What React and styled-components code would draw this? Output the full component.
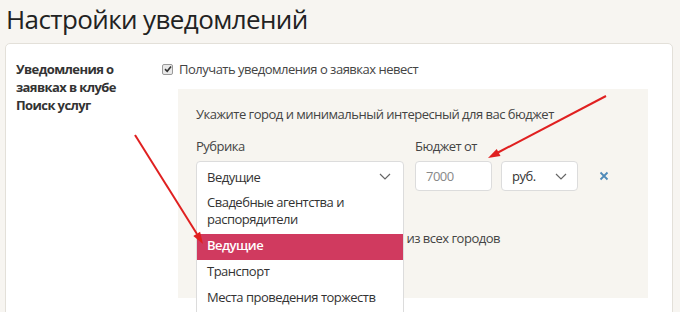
import React from "react";
import styled, { createGlobalStyle } from "styled-components";

const GlobalStyle = createGlobalStyle`
  html, body { margin: 0; padding: 0; }
  body {
    background: #f7f5f1;
    font-family: "Open Sans", "Noto Sans", Arial, sans-serif;
    color: #3a3a3a;
    overflow: hidden;
    width: 680px;
    height: 312px;
    position: relative;
    letter-spacing: -0.5px;
  }
`;

const Page = styled.div`
  padding: 0 7px 0 5px;
`;

const Title = styled.h1`
  margin: 0;
  padding-left: 1px;
  height: 43px;
  font-size: 26px;
  font-weight: 400;
  line-height: 38px;
  letter-spacing: -0.6px;
  color: #222;
`;

const Card = styled.div`
  background: #fff;
  border: 1px solid #e3e0d9;
  border-radius: 5px;
  display: grid;
  grid-template-columns: 146px 1fr;
  padding: 16px 24px 0 10px;
  min-height: 300px;
`;

const SideLabel = styled.div`
  font-size: 13px;
  font-weight: 700;
  line-height: 18px;
  letter-spacing: -0.6px;
  color: #333;
`;

const Content = styled.div`
  display: flex;
  flex-direction: column;
`;

const CheckRow = styled.label`
  display: flex;
  align-items: center;
  gap: ${(p) => p.$gap ?? 6}px;
  font-size: 13px;
  line-height: 18px;
  color: #444;
`;

const Box = styled.span`
  width: 9px;
  height: 9px;
  border: 1px solid #9a9a9a;
  border-radius: 2px;
  background: #e9e9e9;
  display: inline-flex;
  align-items: center;
  justify-content: center;
  flex: none;
`;

const Panel = styled.div`
  margin: 11px 0 0 16px;
  background: #f7f5f0;
  padding: 16px 18px 0;
  height: 193px;
`;

const Hint = styled.div`
  font-size: 13px;
  line-height: 18px;
  color: #444;
`;

const Controls = styled.div`
  display: flex;
  margin-top: 14px;
  gap: 11px;
`;

const Column = styled.div`
  display: flex;
  flex-direction: column;
  gap: 6px;
`;

const FieldLabel = styled.div`
  font-size: 13px;
  line-height: 18px;
  color: #444;
`;

const FieldRow = styled.div`
  display: flex;
  align-items: center;
  gap: 9px;
`;

const SelectWrap = styled.div`
  position: relative;
  width: 208px;
  height: 30px;
`;

const Dropdown = styled.div`
  position: absolute;
  top: 0;
  left: 0;
  right: 0;
  z-index: 2;
  background: #fff;
  border: 1px solid #dcdcdc;
  border-radius: 4px 4px 0 0;
  box-sizing: border-box;
`;

const SelectHead = styled.div`
  height: 29px;
  display: flex;
  align-items: center;
  justify-content: space-between;
  padding: 0 12px 0 10px;
  font-size: 13px;
  color: #333;
`;

const Option = styled.div`
  padding: 3px 10px 6px;
  font-size: 13px;
  line-height: 17px;
  color: ${(p) => (p.$active ? "#fff" : "#333")};
  background: ${(p) => (p.$active ? "#d03a5f" : "transparent")};
  font-weight: ${(p) => (p.$active ? 600 : 400)};
`;

const Input = styled.div`
  width: 77px;
  height: 30px;
  box-sizing: border-box;
  border: 1px solid #dcdcdc;
  border-radius: 4px;
  background: #fff;
  display: flex;
  align-items: center;
  padding-left: 10px;
  font-size: 13px;
  color: #888;
`;

const SmallSelect = styled(Input)`
  color: #333;
  justify-content: space-between;
  padding-right: 10px;
`;

const Remove = styled.span`
  margin-left: 12px;
  display: inline-flex;
`;

const AllCities = styled(CheckRow)`
  margin-top: 38px;
`;

const Annotations = styled.svg`
  position: absolute;
  top: 0;
  left: 0;
  pointer-events: none;
  z-index: 5;
`;

const Chevron = () => (
  <svg width="12" height="7" viewBox="0 0 12 7">
    <path d="M1 1 L6 6 L11 1" fill="none" stroke="#666" strokeWidth="1.2" />
  </svg>
);

const Check = () => (
  <svg width="8" height="8" viewBox="0 0 8 8">
    <path d="M1 4.2 L3.2 6.3 L7 1.5" fill="none" stroke="#333" strokeWidth="1.6" />
  </svg>
);

const options = [
  "Свадебные агентства и распорядители",
  "Ведущие",
  "Транспорт",
  "Места проведения торжеств",
  "Фотографы",
];

export default function App() {
  return (
    <>
      <GlobalStyle />
      <Page>
        <Title>Настройки уведомлений</Title>
        <Card>
          <SideLabel>
            Уведомления о<br />заявках в клубе<br />Поиск услуг
          </SideLabel>
          <Content>
            <CheckRow>
              <Box><Check /></Box>
              Получать уведомления о заявках невест
            </CheckRow>
            <Panel>
              <Hint>Укажите город и минимальный интересный для вас бюджет</Hint>
              <Controls>
                <Column>
                  <FieldLabel>Рубрика</FieldLabel>
                  <SelectWrap>
                    <Dropdown>
                      <SelectHead>
                        Ведущие
                        <Chevron />
                      </SelectHead>
                      {options.map((o) => (
                        <Option key={o} $active={o === "Ведущие"}>
                          {o}
                        </Option>
                      ))}
                    </Dropdown>
                  </SelectWrap>
                </Column>
                <Column>
                  <FieldLabel>Бюджет от</FieldLabel>
                  <FieldRow>
                    <Input>7000</Input>
                    <SmallSelect>
                      руб.
                      <Chevron />
                    </SmallSelect>
                    <Remove>
                      <svg width="10" height="10" viewBox="0 0 10 10">
                        <path d="M1.5 1.5 L8.5 8.5 M8.5 1.5 L1.5 8.5" stroke="#4f8ab8" strokeWidth="1.8" />
                      </svg>
                    </Remove>
                  </FieldRow>
                </Column>
              </Controls>
              <AllCities $gap={0}>
                <Box><Check /></Box>
                Получать уведомления о заявках из всех городов
              </AllCities>
            </Panel>
          </Content>
        </Card>
      </Page>
      <Annotations width="680" height="312" viewBox="0 0 680 312">
        <line x1="135" y1="135" x2="197" y2="234" stroke="#e02020" strokeWidth="2" />
        <polygon points="203,244 193.3,235.9 200.1,231.7" fill="#e02020" />
        <line x1="606" y1="96" x2="498" y2="152.5" stroke="#e02020" strokeWidth="2" />
        <polygon points="488,158 496.7,148.9 500.5,155.9" fill="#e02020" />
      </Annotations>
    </>
  );
}
